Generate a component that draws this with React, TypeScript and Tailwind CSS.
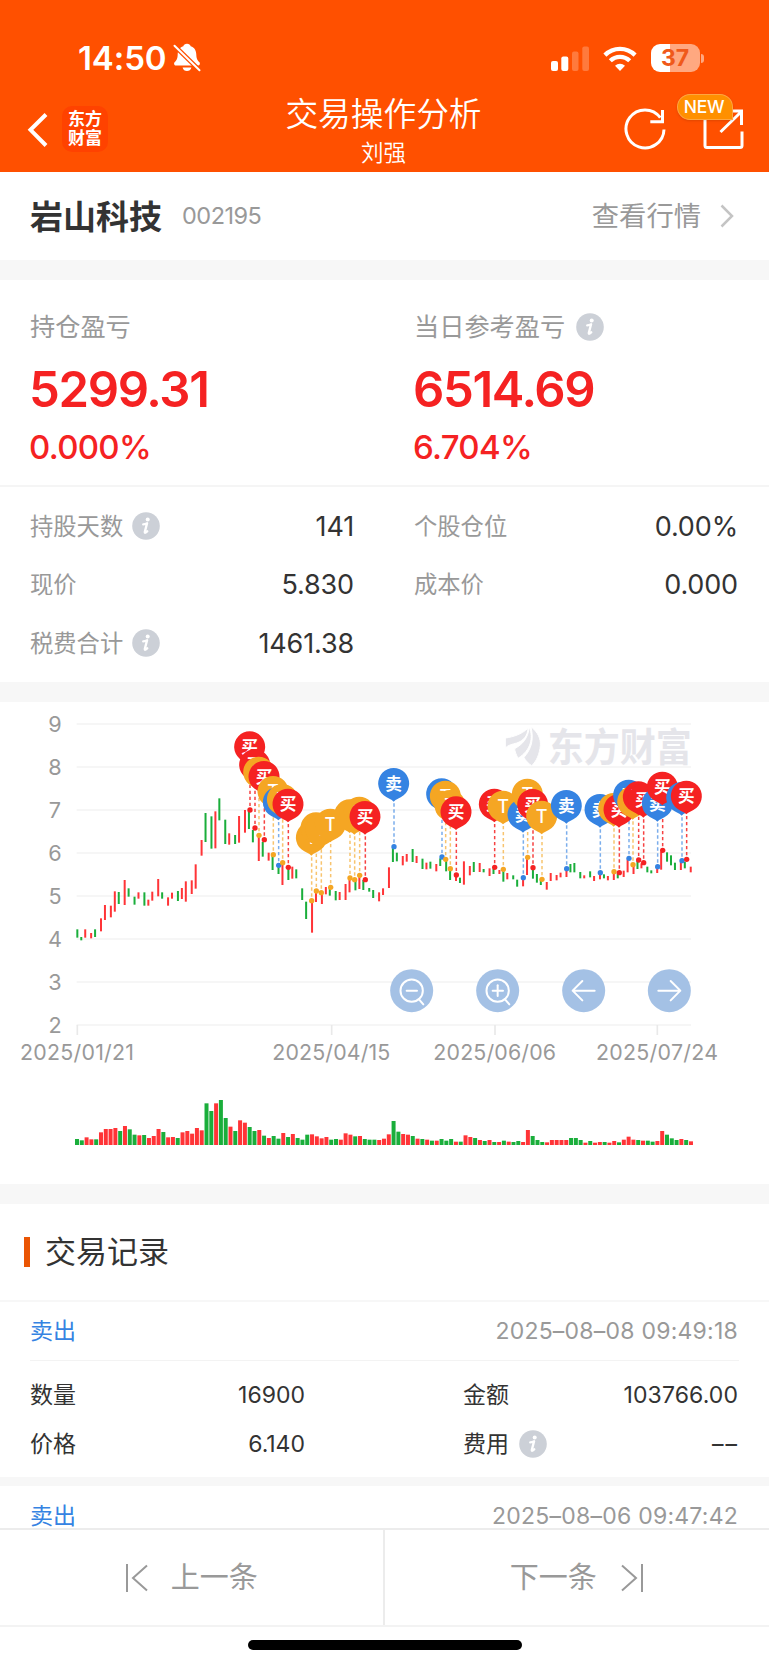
import clsx from "clsx";

const RED = "#ff3437";
const GREEN = "#1aae3b";

// [high, low, up]
const candles: [number, number, number][] = [
  [688, 713, 0], [711, 721, 0], [688, 713, 1], [699, 715, 1], [688, 711, 0],
  [655, 694, 1], [615, 660, 1], [617, 652, 1], [574, 635, 1], [576, 612, 0],
  [540, 615, 1], [565, 590, 0], [590, 614, 0], [577, 596, 1], [577, 617, 0],
  [599, 617, 1], [575, 602, 1], [537, 589, 1], [577, 596, 0], [592, 617, 1],
  [578, 596, 1], [573, 603, 0], [564, 597, 1], [544, 605, 1], [541, 582, 1],
  [493, 566, 1], [420, 467, 1], [339, 426, 0], [349, 446, 0], [334, 445, 1],
  [295, 361, 0], [359, 432, 0], [400, 434, 1], [405, 432, 0], [348, 428, 1],
  [330, 398, 1], [330, 387, 0], [390, 427, 0], [405, 483, 1], [426, 470, 0],
  [458, 482, 1], [465, 510, 0], [497, 522, 0], [492, 555, 1], [502, 540, 0],
  [500, 536, 1], [508, 535, 0], [565, 600, 0], [605, 657, 0], [605, 698, 1],
  [577, 606, 1], [580, 612, 1], [561, 583, 1], [562, 587, 0], [573, 601, 0],
  [576, 600, 1], [552, 600, 1], [538, 577, 1], [541, 571, 0], [530, 567, 1],
  [540, 570, 0], [564, 575, 0], [570, 594, 0], [577, 604, 1], [565, 585, 1],
  [502, 564, 1], [440, 486, 0], [458, 484, 0], [468, 496, 1], [462, 485, 1],
  [447, 486, 0], [468, 489, 1], [476, 507, 0], [488, 508, 1], [485, 506, 0],
  [492, 514, 1], [475, 498, 0], [482, 514, 0], [508, 540, 0], [525, 543, 1],
  [533, 549, 0], [484, 554, 1], [498, 526, 1], [486, 516, 0], [489, 516, 1],
  [507, 517, 0], [505, 528, 1], [507, 522, 0], [510, 522, 1], [510, 545, 0],
  [519, 538, 1], [526, 538, 0], [539, 560, 0], [535, 559, 1], [475, 525, 1],
  [504, 536, 0], [522, 548, 0], [540, 555, 0], [546, 569, 1], [519, 543, 1],
  [525, 541, 1], [518, 532, 1], [508, 531, 1], [492, 517, 0], [489, 517, 0],
  [516, 535, 0], [526, 535, 1], [514, 532, 0], [528, 543, 1], [522, 538, 1],
  [523, 535, 0], [528, 541, 1], [517, 540, 1], [520, 535, 0], [512, 531, 1],
  [478, 517, 1], [495, 522, 1], [482, 507, 0], [490, 505, 1], [500, 517, 0],
  [511, 520, 0], [502, 519, 1], [455, 509, 1], [457, 485, 0], [466, 496, 0],
  [488, 510, 0], [485, 510, 1], [485, 505, 0], [500, 517, 1],
];

const volumes = [
  18, 14, 23, 17, 17, 38, 48, 48, 51, 42, 57, 47, 31, 29, 30, 21, 27, 48, 39,
  23, 24, 21, 38, 42, 34, 51, 44, 125, 102, 125, 135, 81, 55, 42, 74, 67, 54,
  42, 45, 28, 21, 27, 19, 36, 24, 33, 21, 16, 31, 32, 26, 20, 24, 16, 18, 16,
  35, 31, 26, 27, 18, 16, 16, 15, 19, 32, 72, 40, 33, 31, 27, 19, 18, 16, 13,
  13, 18, 13, 18, 10, 10, 29, 24, 21, 15, 12, 15, 9, 9, 13, 10, 9, 12, 9, 45,
  27, 15, 9, 8, 15, 15, 15, 15, 21, 21, 15, 7, 12, 7, 9, 9, 7, 12, 8, 16, 25,
  16, 15, 13, 13, 10, 12, 42, 31, 20, 15, 18, 15, 11,
];

type Kind = "buy" | "sell" | "t";

const kinds = {
  buy: { color: "#f52222", label: "买" },
  sell: { color: "#3583e2", label: "卖" },
  t: { color: "#f5a623", label: "T" },
};

const pins: [number, number, Kind][] = [
  [750, 330, "buy"], [765, 384, "buy"], [777, 406, "t"], [793, 419, "buy"],
  [820, 464, "t"], [836, 496, "sell"], [848, 488, "t"], [865, 502, "buy"],
  [935, 602, "t"], [949, 573, "t"], [964, 578, "t"], [992, 562, "t"],
  [1050, 534, "t"], [1064, 539, "t"], [1079, 526, "t"], [1096, 539, "buy"],
  [1182, 440, "sell"], [1326, 471, "sell"], [1337, 478, "t"], [1351, 506, "t"],
  [1369, 525, "buy"], [1484, 502, "buy"], [1510, 508, "t"], [1570, 533, "sell"],
  [1583, 472, "t"], [1599, 503, "buy"], [1626, 538, "t"], [1700, 506, "sell"],
  [1801, 518, "sell"], [1842, 515, "t"], [1858, 518, "buy"], [1887, 475, "sell"],
  [1899, 494, "t"], [1916, 480, "buy"], [1931, 488, "buy"], [1973, 500, "sell"],
  [1988, 451, "buy"], [2046, 482, "sell"], [2060, 478, "buy"],
];

// [tick x, text, text width]
const dates: [number, string, number][] = [
  [232, "2025/01/21", 342],
  [995, "2025/04/15", 354],
  [1485, "2025/06/06", 368],
  [1972, "2025/07/24", 366],
];

function Info() {
  return (
    <svg className="size-[28px] shrink-0" viewBox="0 0 28 28">
      <circle cx="14" cy="14" r="13.8" fill="#ccd0d7" />
      <circle cx="15.7" cy="7.6" r="2" fill="#fff" />
      <path
        d="M11.2 12.4c1.6-.2 2.8-.6 3.900-1.100l-2.300 8.600c-.2 1.200.8 1.200 2.500-.6"
        fill="none"
        stroke="#fff"
        strokeWidth="2.300"
        strokeLinecap="round"
        strokeLinejoin="round"
      />
    </svg>
  );
}

function StatusBar() {
  return (
    <div className="flex h-[80px] items-end pr-[65px] pb-[8px] pl-[78px]">
      <span className="text-[33px] leading-[27px] font-semibold tracking-[-0.100px]">
        14:50
      </span>
      <svg className="ml-[7px] h-[29px] w-[28px]" viewBox="0 0 28 29">
        <path
          d="M14 .8c2 0 3.300 1 3.700 2.500 3.800 1.200 5.500 4.300 5.600 8.100.1 4.400 1.200 5.800 2.900 7.700 1.400 1.600.6 3.500-1.200 3.500H3c-1.800 0-2.600-1.900-1.200-3.500 1.700-1.900 2.800-3.300 2.900-7.700.1-3.800 1.800-6.900 5.600-8.100C10.700 1.800 12 .8 14 .8zM9.600 24.400h8.800c-.5 2.200-2.300 3.600-4.400 3.600s-3.900-1.400-4.400-3.600z"
          fill="#fff"
        />
        <path d="M0 1.300l28 27.300" stroke="#ff5000" strokeWidth="4.600" />
        <path
          d="M1.500 2.800l25 24.400"
          stroke="#fff"
          strokeWidth="2"
          strokeLinecap="round"
        />
      </svg>
      <svg className="ml-auto h-[26px] w-[39px]" viewBox="0 0 39 26">
        <rect x="0" y="15" width="7" height="10" rx="2" fill="#fff" />
        <rect x="10.300" y="10.500" width="7" height="14.500" rx="2" fill="#fff" />
        <rect x="21" y="5.500" width="6.500" height="19.500" rx="2" fill="#ff7a3d" />
        <rect x="31.300" y="0.500" width="6.700" height="24.500" rx="2" fill="#ff7a3d" />
      </svg>
      <svg className="ml-[13px] h-[26px] w-[34px]" viewBox="0 0 34 26">
        <g fill="none" stroke="#fff" strokeWidth="4.300">
          <path d="M1.900 9.100a21.500 21.500 0 0 1 30.200 0" />
          <path d="M7.300 14.800a13.800 13.800 0 0 1 19.400 0" />
        </g>
        <path d="M17 25l-5-5.200a7.300 7.300 0 0 1 10 0z" fill="#fff" />
      </svg>
      <div className="ml-[14px] flex items-center">
        <div className="flex h-[28px] w-[49px] items-center justify-center rounded-[9px] bg-[linear-gradient(90deg,#fff_38%,#ffa880_38%)] text-[23px] font-bold text-[#f0591a]">
          37
        </div>
        <div className="ml-[1.500px] h-[9px] w-[3px] rounded-r-full bg-[#ffa880]" />
      </div>
    </div>
  );
}

function Header() {
  return (
    <header className="h-[172px] bg-[#ff5000] text-white">
      <StatusBar />
      <div className="flex h-[92px] items-start pr-[24px] pl-[26px]">
        <svg className="mt-[32px] h-[36px] w-[24px]" viewBox="0 0 24 36">
          <path d="M20 2.500L4.500 17.800 20 33.500" fill="none" stroke="#fff" strokeWidth="4" />
        </svg>
        <div className="mt-[26px] ml-[12px] flex size-[46px] flex-col items-center justify-center rounded-[10px] bg-[#ff4200] text-[17px] leading-[19px] font-bold">
          <span>东方</span>
          <span>财富</span>
        </div>
        <div className="flex flex-1 flex-col items-center pl-[36px]">
          <h1 className="mt-[12px] text-[32.700px] leading-[44px] font-[350]">
            交易操作分析
          </h1>
          <p className="mt-[1px] text-[22.500px] leading-[32px] font-[350]">刘强</p>
        </div>
        <svg className="mt-[27px] h-[44px] w-[44px]" viewBox="0 0 44 44">
          <path
            d="M41 22.500A19 19 0 1 1 37.300 10.700M39.500 3v11.800H27.300"
            fill="none"
            stroke="#fff"
            strokeWidth="3"
          />
        </svg>
        <div className="relative mt-[27px] ml-[36px]">
          <svg className="h-[44px] w-[42px]" viewBox="0 0 42 44">
            <path
              d="M2 8v30.500q0 2 2 2h33q2 0 2-2V24.500M29 4h9.500v14M38 5L17.500 25"
              fill="none"
              stroke="#fff"
              strokeWidth="3"
            />
          </svg>
          <span className="absolute -top-[13px] -left-[26px] flex h-[26px] w-[56px] items-center justify-center rounded-full rounded-br-[3px] border border-[#ffa640] bg-[#ff9000] pr-[2px] text-[17.500px] font-medium tracking-[-0.300px] shadow-sm">
            NEW
          </span>
        </div>
      </div>
    </header>
  );
}

function Summary({ label, value, rate, info }: any) {
  return (
    <div>
      <div className="flex h-[34px] items-center gap-[11px] text-[25.200px] text-[#999]">
        <span className="pt-[2px]">{label}</span>
        {info && <Info />}
      </div>
      <div className="mt-[19px] -ml-[1px] text-[49px] leading-[54px] font-semibold tracking-[-1.350px] text-[#f52222]">
        {value}
      </div>
      <div className="mt-[11px] -ml-[1px] text-[33px] leading-[38px] font-medium tracking-[-0.700px] text-[#f52222]">
        {rate}
      </div>
    </div>
  );
}

function Stat({ label, value, info, className }: any) {
  return (
    <div className={clsx("flex h-[58.600px] items-center", className)}>
      <span className="pt-[2px] text-[23.300px] text-[#999]">{label}</span>
      {info && (
        <span className="ml-[9px]">
          <Info />
        </span>
      )}
      <span className="ml-auto pt-[1px] text-[27px] tracking-[-0.150px] text-[#333]">
        {value}
      </span>
    </div>
  );
}

function Pin({ x, y, kind }: { x: number; y: number; kind: Kind }) {
  const { color, label } = kinds[kind];
  return (
    <g transform={`translate(${x - 1} ${y - 189})`}>
      <path
        d="M0 54C-6 47-18 44-30 35A46.500 46.500 0 1 1 30 35C18 44 6 47 0 54z"
        fill={color}
      />
      <text
        y={kind === "t" ? 19 : 18}
        textAnchor="middle"
        fontSize={kind === "t" ? 54 : 50}
        fontWeight={kind === "t" ? 500 : 700}
        fill="#fff"
      >
        {label}
      </text>
    </g>
  );
}

function Chart() {
  return (
    <svg className="block h-[482px] w-full" viewBox="0 6 2307 1446">
      {[9, 8, 7, 6, 5, 4, 3, 2].map((n, i) => (
        <g key={n}>
          <path d={`M230 ${72 + i * 129}H2073`} stroke="#f6f6f6" strokeWidth="6" />
          <text
            x="165"
            y={95 + i * 129}
            textAnchor="middle"
            fontSize="65"
            fontWeight="400"
            fill="#999"
          >
            {n}
          </text>
        </g>
      ))}
      {dates.map(([x, text, width]) => (
        <g key={text}>
          <path d={`M${x} 975v30`} stroke="#e9e9e9" strokeWidth="5" />
          <text
            x={x - 1}
            y="1080"
            textAnchor="middle"
            fontSize="64"
            fontWeight="400"
            textLength={width}
            fill="#999"
          >
            {text}
          </text>
        </g>
      ))}

      {/* watermark */}
      <g fill="#e5e5ea">
        <g transform="translate(1470 45)" stroke="#fff" strokeWidth="3">
          <path d="M46 69C70 66 94 58 114 40C113 62 100 78 80 84C66 88 54 90 46 99z" />
          <path d="M74 101C98 88 114 70 118 36C131 70 122 106 84 130C79 120 74 108 74 101z" />
          <path d="M102 127C124 102 132 76 123 35C144 52 153 72 151 92C149 116 139 140 125 152C115 145 106 137 102 127z" />
        </g>
        <text
          x="1643"
          y="182"
          fontSize="116"
          fontWeight="700"
          textLength="432"
          lengthAdjust="spacingAndGlyphs"
        >
          东方财富
        </text>
      </g>

      {candles.map(([high, low, up], i) => (
        <rect
          key={i}
          x={229 + Math.floor((i * 14.39) / 5.917) * 5.917}
          y={high}
          width="6"
          height={low - high}
          fill={up ? RED : GREEN}
        />
      ))}
      {volumes.map((h, i) => (
        <rect
          key={i}
          x={225 + i * 14.39}
          y={1335 - h}
          width="12"
          height={h}
          fill={candles[i][2] ? RED : GREEN}
        />
      ))}

      {pins.map(([x, y, kind], i) => (
        <g key={i} stroke={kinds[kind].color} fill={kinds[kind].color}>
          <path
            d={`M${x} ${y - 130}V${y}`}
            strokeWidth="4.500"
            strokeDasharray="10 8"
            opacity={kind === "buy" ? 0.85 : 0.65}
          />
          <circle cx={x} cy={y} r="8" stroke="none" />
        </g>
      ))}
      {pins.map(([x, y, kind], i) => (
        <Pin key={i} x={x} y={y} kind={kind} />
      ))}

      {[1235, 1493, 1751, 2008].map((x, i) => (
        <g
          key={x}
          transform={`translate(${x} 872)`}
          fill="none"
          stroke="#fff"
          strokeWidth="6"
          strokeLinecap="round"
          strokeLinejoin="round"
        >
          <circle r="64.500" fill="#a1bfe4" fillOpacity="0.970" stroke="none" />
          {i < 2 && <circle r="33.500" />}
          {i < 2 && <path d="M22 26L35 41M-15 0H16" />}
          {i === 1 && <path d="M0-16V16" />}
          {i === 2 && <path d="M33 0H-33M-4-29L-33 0-4 29" />}
          {i === 3 && <path d="M-33 0H33M4-29L33 0 4 29" />}
        </g>
      ))}
    </svg>
  );
}

function RecordHead({ time }: { time: string }) {
  return (
    <div className="flex h-[58px] items-center justify-between text-[23px]">
      <span className="text-[#3583e2]">卖出</span>
      <span className="mr-[1px] tracking-[0.230px] text-[#999]">{time}</span>
    </div>
  );
}

export default function App() {
  return (
    <div className="relative flex h-[1665px] w-[769px] flex-col overflow-hidden bg-[#f7f7f7] font-['Inter','Noto_Sans_CJK_SC',sans-serif] font-[370] text-[#333]">
      <Header />

      <section className="flex h-[88px] shrink-0 items-center bg-white px-[30px]">
        <h2 className="pt-[3px] text-[33px] font-semibold">岩山科技</h2>
        <span className="ml-[20px] text-[23.500px] tracking-[-0.500px] text-[#999]">
          002195
        </span>
        <span className="ml-auto pt-[2px] text-[27.300px] text-[#999]">查看行情</span>
        <svg className="mr-[5px] ml-[19px] h-[24px] w-[14px]" viewBox="0 0 14 24">
          <path d="M1.500 1.500L12 12 1.500 22.500" fill="none" stroke="#c4c4c4" strokeWidth="2.500" />
        </svg>
      </section>

      <section className="mt-[20px] h-[402px] shrink-0 bg-white">
        <div className="grid h-[207px] grid-cols-[384px_1fr] border-b-2 border-[#f5f5f5] px-[30px] pt-[30px]">
          <Summary label="持仓盈亏" value="5299.31" rate="0.000%" />
          <Summary label="当日参考盈亏" value="6514.69" rate="6.704%" info />
        </div>
        <div className="grid grid-cols-[324px_324px] gap-x-[60px] px-[30px] pt-[10px]">
          <Stat label="持股天数" value="141" info />
          <Stat label="个股仓位" value="0.00%" />
          <Stat label="现价" value="5.830" />
          <Stat label="成本价" value="0.000" />
          <Stat label="税费合计" value="1461.38" info />
        </div>
      </section>

      <section className="mt-[20px] h-[482px] shrink-0 bg-white">
        <Chart />
      </section>

      <section className="mt-[20px] h-[273px] shrink-0 bg-white">
        <div className="flex h-[98px] items-center border-b-2 border-[#f7f7f7] pl-[24px]">
          <span className="h-[30px] w-[6px] bg-[#ea5504]" />
          <h3 className="ml-[15px] pt-[1px] text-[31px]">交易记录</h3>
        </div>
        <div className="px-[30px]">
          <div className="border-b border-[#f3f3f3]">
            <RecordHead time="2025–08–08 09:49:18" />
          </div>
          <div className="grid grid-cols-[275px_275px] justify-between pt-[9.500px] pr-[1px] text-[23px] leading-[49px]">
            <div className="flex justify-between">
              <span>数量</span>
              <span>16900</span>
            </div>
            <div className="flex justify-between">
              <span>金额</span>
              <span className="tracking-[0.100px]">103766.00</span>
            </div>
            <div className="flex justify-between">
              <span>价格</span>
              <span>6.140</span>
            </div>
            <div className="flex items-center">
              <span className="mr-[10px]">费用</span>
              <Info />
              <span className="-mr-[1px] ml-auto tracking-[2px]">––</span>
            </div>
          </div>
        </div>
      </section>

      <section className="mt-[9px] h-[50px] shrink-0 bg-white px-[30px] pt-[1px]">
        <RecordHead time="2025–08–06 09:47:42" />
      </section>

      <nav className="absolute bottom-0 left-0 h-[137px] w-full border-t-2 border-[#ececec] bg-white">
        <div className="grid h-[97px] grid-cols-2 border-b-2 border-[#f3f3f3] text-[29px] text-[#999]">
          <button className="flex items-center justify-center border-r-2 border-[#ececec]">
            <svg className="mr-[22px] h-[28px] w-[24px]" viewBox="0 0 24 28">
              <path d="M2 0v28M22 1.500L8 14l14 12.500" fill="none" stroke="#999" strokeWidth="2" />
            </svg>
            上一条
          </button>
          <button className="flex items-center justify-center">
            下一条
            <svg className="ml-[23px] h-[28px] w-[24px]" viewBox="0 0 24 28">
              <path d="M22 0v28M2 1.500L16 14 2 26.500" fill="none" stroke="#999" strokeWidth="2" />
            </svg>
          </button>
        </div>
        <div className="mx-auto mt-[13px] h-[10px] w-[274px] rounded-full bg-black" />
      </nav>
    </div>
  );
}
